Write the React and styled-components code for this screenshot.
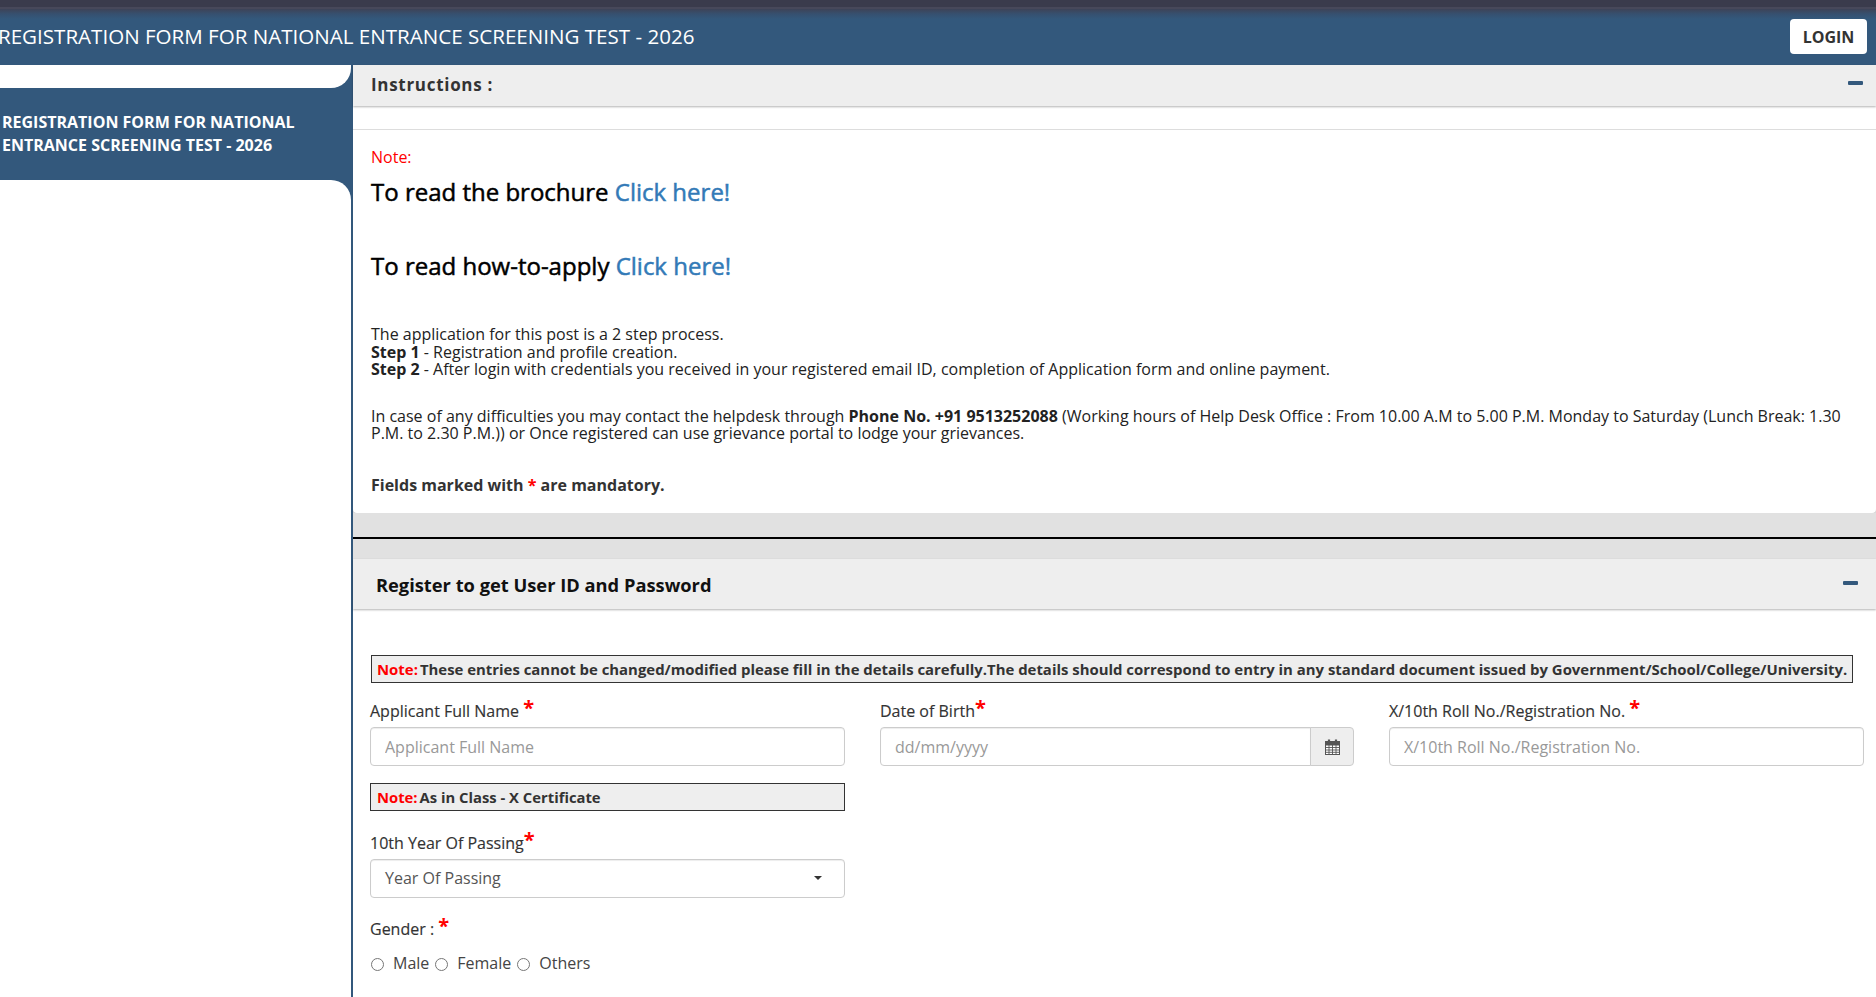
import React from "react";
import styled, { createGlobalStyle } from "styled-components";

const Global = createGlobalStyle`
  html, body { margin: 0; padding: 0; background: #fff; }
  * { box-sizing: border-box; }
  body { font-family: "Open Sans", "Liberation Sans", sans-serif; color: #333; }
`;
const Shell = styled.div`
  height: 997px; overflow: hidden; display: flex; flex-direction: column;
`;
const TopStrip = styled.div`
  height: 9px; flex: none; background: #3a3b4c; border-bottom: 2px solid #47485a;
`;
const Header = styled.header`
  height: 56px; flex: none; display: flex; align-items: center; justify-content: space-between;
  padding: 0 9px 1px 0;
  background: linear-gradient(#3e4357 0, #36506f 5px, #33587c 10px);
`;
const HeaderTitle = styled.div`
  font-size: 20.57px; color: #fff; margin: -2px 0 0 -2px; white-space: nowrap;
`;
const LoginButton = styled.button`
  width: 77px; height: 35px; background: #fff; border: 0; border-radius: 4px;
  font: 700 16px "Open Sans", sans-serif; color: #333; padding: 0;
`;
const Body = styled.div`
  flex: 1; min-height: 0; display: flex;
`;
const Sidebar = styled.aside`
  width: 353px; flex: none; border-right: 2px solid #33587c; background: #fff;
`;
const SideSpacer = styled.div`
  height: 23px; background: #33587c;
  & > div { height: 100%; background: #fff; border-bottom-right-radius: 20px; }
`;
const SideItem = styled.div`
  height: 92px; background: #33587c; color: #fff; font-weight: 700; font-size: 16px;
  line-height: 23px; padding: 23px 40px 0 2px;
`;
const SideRest = styled.div`
  height: 24px; background: #33587c;
  & > div { height: 100%; background: #fff; border-top-right-radius: 20px; }
`;
const Main = styled.main`
  flex: 1; min-width: 0; background: #fff;
`;
const PanelHeading = styled.div`
  display: flex; align-items: center; justify-content: space-between;
  height: ${p => p.$h}px; background: #eee; box-shadow: 0 1px 2px rgba(0,0,0,.3);
  padding: 0 ${p => p.$pr}px 0 ${p => p.$pl}px; position: relative;
`;
const PanelTitle = styled.div`
  font-weight: 700; font-size: ${p => p.$size}px; color: ${p => p.$color};
  letter-spacing: ${p => p.$ls || 0}px; margin-top: ${p => p.$mt || 0}px;
`;
const Minus = styled.span`
  width: 15px; height: 4px; background: #33587c; border-radius: 1px; margin-top: ${p => p.$mt || 0}px;
`;
const Rule = styled.div`
  margin-top: 23px; height: 1px; background: #ddd;
`;
const InstructionWrap = styled.div`
  background: #e1e1e1;
`;
const InstructionBody = styled.div`
  height: 383px; padding: 17px 16px 0 18px; font-size: 16px; line-height: 17.5px; color: #222;
  background: #fff; border-radius: 0 0 4px 4px; box-shadow: 0 1px 1px rgba(0,0,0,.1);
`;
const RedNote = styled.div`
  color: #f00; font-size: 16px; line-height: 20px;
`;
const BigLine = styled.div`
  font-size: 24px; line-height: 32px; color: #000; font-weight: 500; margin-top: ${p => p.$mt}px;
  -webkit-text-stroke: 0.5px #000;
`;
const Link = styled.a`
  color: #337ab7; -webkit-text-stroke: 0.5px #337ab7;
`;
const Para = styled.p`
  margin: ${p => p.$mt}px 0 0;
`;
const Mandatory = styled.div`
  margin-top: 34px; font-weight: 700; color: #333; font-size: 16px;
`;
const Star = styled.span`
  color: #f00; font-weight: 700;
`;
const GrayBand = styled.div`
  height: 46px; background: #e1e1e1; display: flex; flex-direction: column;
`;
const BlackLine = styled.div`
  margin-top: 24px; height: 2px; background: #000;
`;
const FormArea = styled.div`
  padding: 46px 5px 0 17px;
`;
const NoteBox = styled.div`
  border: 1px solid #333; background: #eee; height: ${p => p.$h}px; width: ${p => p.$w};
  font-weight: 700; font-size: ${p => p.$size}px; display: flex; align-items: center; padding-left: 6px;
  white-space: nowrap; color: #333; gap: 2px;
`;
const RedText = styled.span`
  color: #f00;
`;
const WideNote = styled(NoteBox)`
  margin-left: 1px; padding-left: 5px;
`;
const Columns = styled.div`
  display: grid; grid-template-columns: 475px 474px 475px; column-gap: 35px; margin-top: 17px;
`;
const Field = styled.div`
  min-width: 0;
`;
const Label = styled.label`
  display: block; font-size: 16px; line-height: 22px; height: 27px; font-weight: 500; color: #333; position: relative;
  -webkit-text-stroke: 0.15px #333;
`;
const LabelStar = styled.span`
  color: #f00; font-weight: 700; font-size: 20px; position: relative; top: -2px; line-height: 0;
  -webkit-text-stroke: 0;
`;
const Input = styled.input`
  display: block; width: 100%; height: 39px; border: 1px solid #ccc; border-radius: 4px;
  padding: 0 14px; font: 16px "Open Sans", sans-serif; color: #555;
  box-shadow: inset 0 1px 1px rgba(0,0,0,.075);
  &::placeholder { color: #999; }
`;
const InputGroup = styled.div`
  display: flex; height: 39px;
`;
const GroupInput = styled(Input)`
  flex: 1; min-width: 0; border-radius: 4px 0 0 4px;
`;
const Addon = styled.div`
  width: 44px; flex: none; background: #eee; border: 1px solid #ccc; margin-left: -1px;
  border-radius: 0 4px 4px 0; display: flex; align-items: center; justify-content: center; color: #555;
`;
const SelectBox = styled.div`
  height: 39px; border: 1px solid #ccc; border-radius: 4px; display: flex; align-items: center; justify-content: space-between;
  padding: 0 22px 1px 14px; font-size: 16px; color: #555; box-shadow: inset 0 1px 1px rgba(0,0,0,.075);
`;
const Caret = styled.span`
  width: 0; height: 0; border: 4px solid transparent; border-top-color: #333; border-bottom: 0;
`;
const RadioRow = styled.div`
  display: flex; align-items: center; margin-top: 4px; font-size: 16px; color: #444; height: 27px;
`;
const Radio = styled.input.attrs({ type: "radio" })`
  width: 13px; height: 13px; margin: 4px 9px 0 1px; flex: none;
`;
const RadioLabel = styled.label`
  margin-right: ${p => p.$mr}px;
`;
const Stack = styled.div`
  margin-top: ${p => p.$mt}px; width: 475px;
`;

const CalendarIcon = () => (
  <svg width="15" height="16" viewBox="0 0 15 16" fill="none" stroke="#555">
    <rect x="0.5" y="2.5" width="14" height="13" fill="#fff" />
    <rect x="0.5" y="2.5" width="14" height="3.5" fill="#555" />
    <path d="M4 0.5v3.5M11 0.5v3.5" strokeWidth="2.2" />
    <path d="M0.5 8.5h14M0.5 11h14M0.5 13.3h14M4 6v9.5M7.5 6v9.5M11 6v9.5" strokeWidth="0.9" />
  </svg>
);

export default function App() {
  return (
    <Shell>
      <Global />
      <TopStrip />
      <Header>
        <HeaderTitle>REGISTRATION FORM FOR NATIONAL ENTRANCE SCREENING TEST - 2026</HeaderTitle>
        <LoginButton>LOGIN</LoginButton>
      </Header>
      <Body>
        <Sidebar>
          <SideSpacer><div /></SideSpacer>
          <SideItem>REGISTRATION FORM FOR NATIONAL ENTRANCE SCREENING TEST - 2026</SideItem>
          <SideRest><div /></SideRest>
        </Sidebar>
        <Main>
          <PanelHeading $h={41} $pl={18} $pr={13}>
            <PanelTitle $size={17} $color="#333" $ls={0.7} $mt={-3}>Instructions :</PanelTitle>
            <Minus $mt={-5} />
          </PanelHeading>
          <Rule />
          <InstructionWrap>
            <InstructionBody>
              <RedNote>Note:</RedNote>
              <BigLine $mt={9}>To read the brochure <Link>Click here!</Link></BigLine>
              <BigLine $mt={42}>To read how-to-apply <Link>Click here!</Link></BigLine>
              <Para $mt={44}>
                The application for this post is a 2 step process.<br />
                <b>Step 1</b> - Registration and profile creation.<br />
                <b>Step 2</b> - After login with credentials you received in your registered email ID, completion of Application form and online payment.
              </Para>
              <Para $mt={29}>
                In case of any difficulties you may contact the helpdesk through <b>Phone No. +91 9513252088</b> (Working hours of Help Desk Office : From 10.00 A.M to 5.00 P.M. Monday to Saturday (Lunch Break: 1.30 P.M. to 2.30 P.M.)) or Once registered can use grievance portal to lodge your grievances.
              </Para>
              <Mandatory>Fields marked with <Star>*</Star> are mandatory.</Mandatory>
            </InstructionBody>
          </InstructionWrap>
          <GrayBand><BlackLine /></GrayBand>
          <PanelHeading $h={50} $pl={23} $pr={18}>
            <PanelTitle $size={18.3} $color="#111" $mt={1}>Register to get User ID and Password</PanelTitle>
            <Minus $mt={-3} />
          </PanelHeading>
          <FormArea>
            <WideNote $h={28} $size={14.92} $w="1482px"><RedText>Note:</RedText> These entries cannot be changed/modified please fill in the details carefully.The details should correspond to entry in any standard document issued by Government/School/College/University.</WideNote>
            <Columns>
              <Field>
                <Label>Applicant Full Name <LabelStar>*</LabelStar></Label>
                <Input placeholder="Applicant Full Name" />
              </Field>
              <Field>
                <Label>Date of Birth<LabelStar>*</LabelStar></Label>
                <InputGroup>
                  <GroupInput placeholder="dd/mm/yyyy" />
                  <Addon><CalendarIcon /></Addon>
                </InputGroup>
              </Field>
              <Field>
                <Label>X/10th Roll No./Registration No. <LabelStar>*</LabelStar></Label>
                <Input placeholder="X/10th Roll No./Registration No." />
              </Field>
            </Columns>
            <Stack $mt={17}>
              <NoteBox $h={28} $size={14.8} $w="475px"><RedText>Note:</RedText> As in Class - X Certificate</NoteBox>
            </Stack>
            <Stack $mt={21}>
              <Label>10th Year Of Passing<LabelStar>*</LabelStar></Label>
              <SelectBox>Year Of Passing<Caret /></SelectBox>
            </Stack>
            <Stack $mt={20}>
              <Label>Gender : <LabelStar>*</LabelStar></Label>
              <RadioRow>
                <Radio name="g" /><RadioLabel $mr={5}>Male</RadioLabel>
                <Radio name="g" /><RadioLabel $mr={5}>Female</RadioLabel>
                <Radio name="g" /><RadioLabel $mr={0}>Others</RadioLabel>
              </RadioRow>
            </Stack>
          </FormArea>
        </Main>
      </Body>
    </Shell>
  );
}
